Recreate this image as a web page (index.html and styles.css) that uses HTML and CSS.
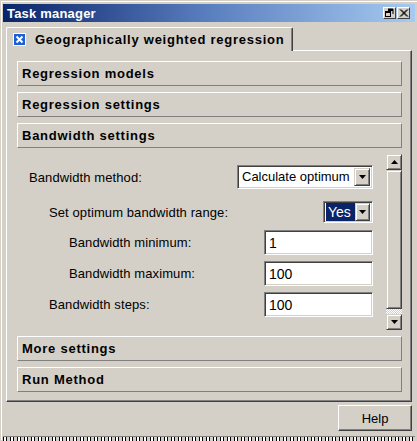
FILE: index.html
```html
<!DOCTYPE html>
<html>
<head>
<meta charset="utf-8">
<link rel="stylesheet" href="styles.css">
</head>
<body>
<div class="window">
  <div class="titlebar">
    <span class="title">Task manager</span>
    <div class="tbtns">
      <span class="tbtn"><svg width="11" height="10" viewBox="0 0 11 10"><path d="M4 1h5v5M4 1.5h5M4 2.5h5" stroke="#000" fill="none"/><rect x="1.5" y="3.5" width="5" height="5" fill="none" stroke="#000"/><path d="M1 4.5h6" stroke="#000"/></svg></span>
      <span class="tbtn"><svg width="11" height="10" viewBox="0 0 11 10"><path d="M2 1.5l7 7M3 1.5l7 7M9 1.5l-7 7M10 1.5l-7 7" stroke="#000" fill="none"/></svg></span>
    </div>
  </div>
  <div class="tabs">
    <div class="tab">
      <span class="chk"><svg width="11" height="11" viewBox="0 0 11 11"><rect width="11" height="11" fill="#1f5fd6"/><path d="M2.5 2.5l6 6M8.5 2.5l-6 6" stroke="#fff" stroke-width="2"/></svg></span>
      <span class="tabtext">Geographically weighted regression</span>
    </div>
  </div>
  <div class="panel">
    <div class="bar">Regression models</div>
    <div class="bar">Regression settings</div>
    <div class="bar">Bandwidth settings</div>
    <div class="content">
      <div class="form">
        <div class="row ind1">
          <span class="lbl">Bandwidth method:</span>
          <div class="combo wide"><span class="cval">Calculate optimum</span><span class="dd"><svg width="7" height="4" viewBox="0 0 7 4"><path d="M0 0h7L3.5 4z" fill="#000"/></svg></span></div>
        </div>
        <div class="row ind2 r2">
          <span class="lbl">Set optimum bandwidth range:</span>
          <div class="combo small"><span class="cval sel">Yes</span><span class="dd"><svg width="7" height="4" viewBox="0 0 7 4"><path d="M0 0h7L3.5 4z" fill="#000"/></svg></span></div>
        </div>
        <div class="row ind3">
          <span class="lbl">Bandwidth minimum:</span>
          <div class="input">1</div>
        </div>
        <div class="row ind3">
          <span class="lbl">Bandwidth maximum:</span>
          <div class="input">100</div>
        </div>
        <div class="row ind2">
          <span class="lbl">Bandwidth steps:</span>
          <div class="input">100</div>
        </div>
      </div>
      <div class="scrollbar">
        <span class="sbtn"><svg width="7" height="4" viewBox="0 0 7 4"><path d="M0 4h7L3.5 0z" fill="#000"/></svg></span>
        <span class="thumb"></span>
        <span class="dither"></span>
        <span class="sbtn"><svg width="7" height="4" viewBox="0 0 7 4"><path d="M0 0h7L3.5 4z" fill="#000"/></svg></span>
      </div>
    </div>
    <div class="bar">More settings</div>
    <div class="bar">Run Method</div>
  </div>
  <div class="footer">
    <div class="help">Help</div>
  </div>
  <div class="status"></div>
</div>
</body>
</html>
```

FILE: styles.css
```css
html, body {
  margin: 0;
  padding: 0;
}
body {
  width: 417px;
  height: 441px;
  overflow: hidden;
  background: #d4d0c8;
  font-family: "Liberation Sans", Arial, sans-serif;
  font-size: 13px;
  color: #000;
  box-sizing: border-box;
  padding: 1px 0 0 1px;
}
.window {
  border-top: 1px solid #fff;
  border-left: 1px solid #fff;
  padding: 2px 2px 0 1px;
  height: 439px;
  box-sizing: border-box;
  display: flex;
  flex-direction: column;
}
.titlebar {
  height: 18px;
  display: flex;
  align-items: center;
  justify-content: space-between;
  background: linear-gradient(90deg, #0a246a 0%, #5a7fbf 50%, #a6caf0 100%);
  padding-left: 4px;
  padding-right: 5px;
  flex: none;
}
.title {
  color: #fff;
  font-weight: bold;
  letter-spacing: 0.2px;
}
.tbtns {
  display: flex;
  gap: 1px;
}
.tbtn {
  width: 13px;
  height: 12px;
  box-sizing: border-box;
  background: #d4d0c8;
  border-top: 1px solid #fff;
  border-left: 1px solid #fff;
  border-right: 1px solid #404040;
  border-bottom: 1px solid #404040;
  display: flex;
  align-items: center;
  justify-content: center;
}
.tabs {
  display: flex;
  margin-top: 5px;
  margin-left: 3px;
  flex: none;
}
.tab {
  position: relative;
  z-index: 1;
  height: 24px;
  margin-bottom: -1px;
  width: 287px;
  box-sizing: border-box;
  background: #d4d0c8;
  border-top: 1px solid #fff;
  border-left: 1px solid #fff;
  border-right: 1px solid #404040;
  box-shadow: inset -1px 0 #808080;
  border-radius: 2px 2px 0 0;
  display: flex;
  align-items: center;
  padding-left: 6px;
}
.chk {
  width: 13px;
  height: 13px;
  box-sizing: border-box;
  border: 1px solid #fff;
  display: flex;
  margin-right: 9px;
}
.tabtext {
  font-weight: bold;
  letter-spacing: 0.75px;
}
.panel {
  margin: 0 3px 0 3px;
  height: 352px;
  box-sizing: border-box;
  border-top: 1px solid #fff;
  border-left: 1px solid #fff;
  border-right: 1px solid #404040;
  border-bottom: 1px solid #404040;
  box-shadow: inset -1px -1px #808080;
  padding: 10px 9px 9px 10px;
  display: flex;
  flex-direction: column;
  gap: 6px;
  flex: none;
}
.bar {
  height: 25px;
  box-sizing: border-box;
  border-top: 1px solid #fff;
  border-left: 1px solid #fff;
  border-right: 1px solid #808080;
  border-bottom: 1px solid #808080;
  padding-left: 4px;
  display: flex;
  align-items: center;
  font-weight: bold;
  letter-spacing: 0.75px;
  flex: none;
}
.content {
  height: 176px;
  display: flex;
  flex: none;
}
.form {
  flex: 1;
  display: flex;
  flex-direction: column;
  gap: 6px;
  padding-top: 11px;
}
.row {
  display: flex;
  align-items: center;
  justify-content: space-between;
  padding-right: 13px;
  height: 25px;
}
.lbl {
  letter-spacing: 0.1px;
}
.ind1 { padding-left: 12px; height: 24px; }
.ind2 { padding-left: 32px; }
.ind3 { padding-left: 52px; }
.r2 { margin-top: 5px; height: 24px; }
.combo, .input {
  box-sizing: border-box;
  background: #fff;
  border-top: 1px solid #808080;
  border-left: 1px solid #808080;
  border-right: 1px solid #fff;
  border-bottom: 1px solid #fff;
  box-shadow: inset 1px 1px #404040, inset -1px -1px #d4d0c8;
}
.combo {
  display: flex;
  align-items: center;
  justify-content: space-between;
  padding: 2px;
}
.combo.wide { width: 136px; height: 24px; }
.combo.small { width: 50px; height: 22px; }
.cval {
  padding-left: 2px;
  line-height: 18px;
}
.cval.sel {
  background: #0a246a;
  color: #fff;
  padding: 0 2px 0 2px;
  margin-left: 0;
  width: 27px;
  font-size: 14px;
}
.dd {
  width: 16px;
  height: 18px;
  box-sizing: border-box;
  background: #d4d0c8;
  border-top: 1px solid #d4d0c8;
  border-left: 1px solid #d4d0c8;
  border-right: 1px solid #404040;
  border-bottom: 1px solid #404040;
  box-shadow: inset 1px 1px #fff, inset -1px -1px #808080;
  display: flex;
  align-items: center;
  justify-content: center;
}
.input {
  width: 109px;
  height: 25px;
  display: flex;
  align-items: center;
  padding-left: 4px;
  font-size: 14px;
}
.scrollbar {
  width: 16px;
  display: flex;
  flex-direction: column;
  flex: none;
}
.sbtn, .thumb {
  box-sizing: border-box;
  background: #d4d0c8;
  border-top: 1px solid #d4d0c8;
  border-left: 1px solid #d4d0c8;
  border-right: 1px solid #404040;
  border-bottom: 1px solid #404040;
  box-shadow: inset 1px 1px #fff, inset -1px -1px #808080;
}
.sbtn {
  height: 16px;
  display: flex;
  align-items: center;
  justify-content: center;
  flex: none;
}
.thumb {
  height: 139px;
  flex: none;
}
.dither {
  height: 5px;
  flex: none;
  background: repeating-conic-gradient(#fff 0 25%, #d4d0c8 0 50%) 0 0 / 2px 2px;
}
.footer {
  display: flex;
  justify-content: flex-end;
  padding: 3px 3px 0 0;
  flex: none;
}
.help {
  width: 74px;
  height: 26px;
  box-sizing: border-box;
  border-top: 1px solid #fff;
  border-left: 1px solid #fff;
  border-right: 1px solid #404040;
  border-bottom: 1px solid #404040;
  box-shadow: inset -1px -1px #808080;
  display: flex;
  align-items: center;
  justify-content: center;
  font-size: 13px;
}
.status {
  margin-top: 5px;
  height: 5px;
  border-top: 1px solid #808080;
  background: repeating-linear-gradient(90deg, #000 0 1px, #fff 1px 3px, #000 3px 4px, #d4d0c8 4px 7px);
  flex: none;
}
```
